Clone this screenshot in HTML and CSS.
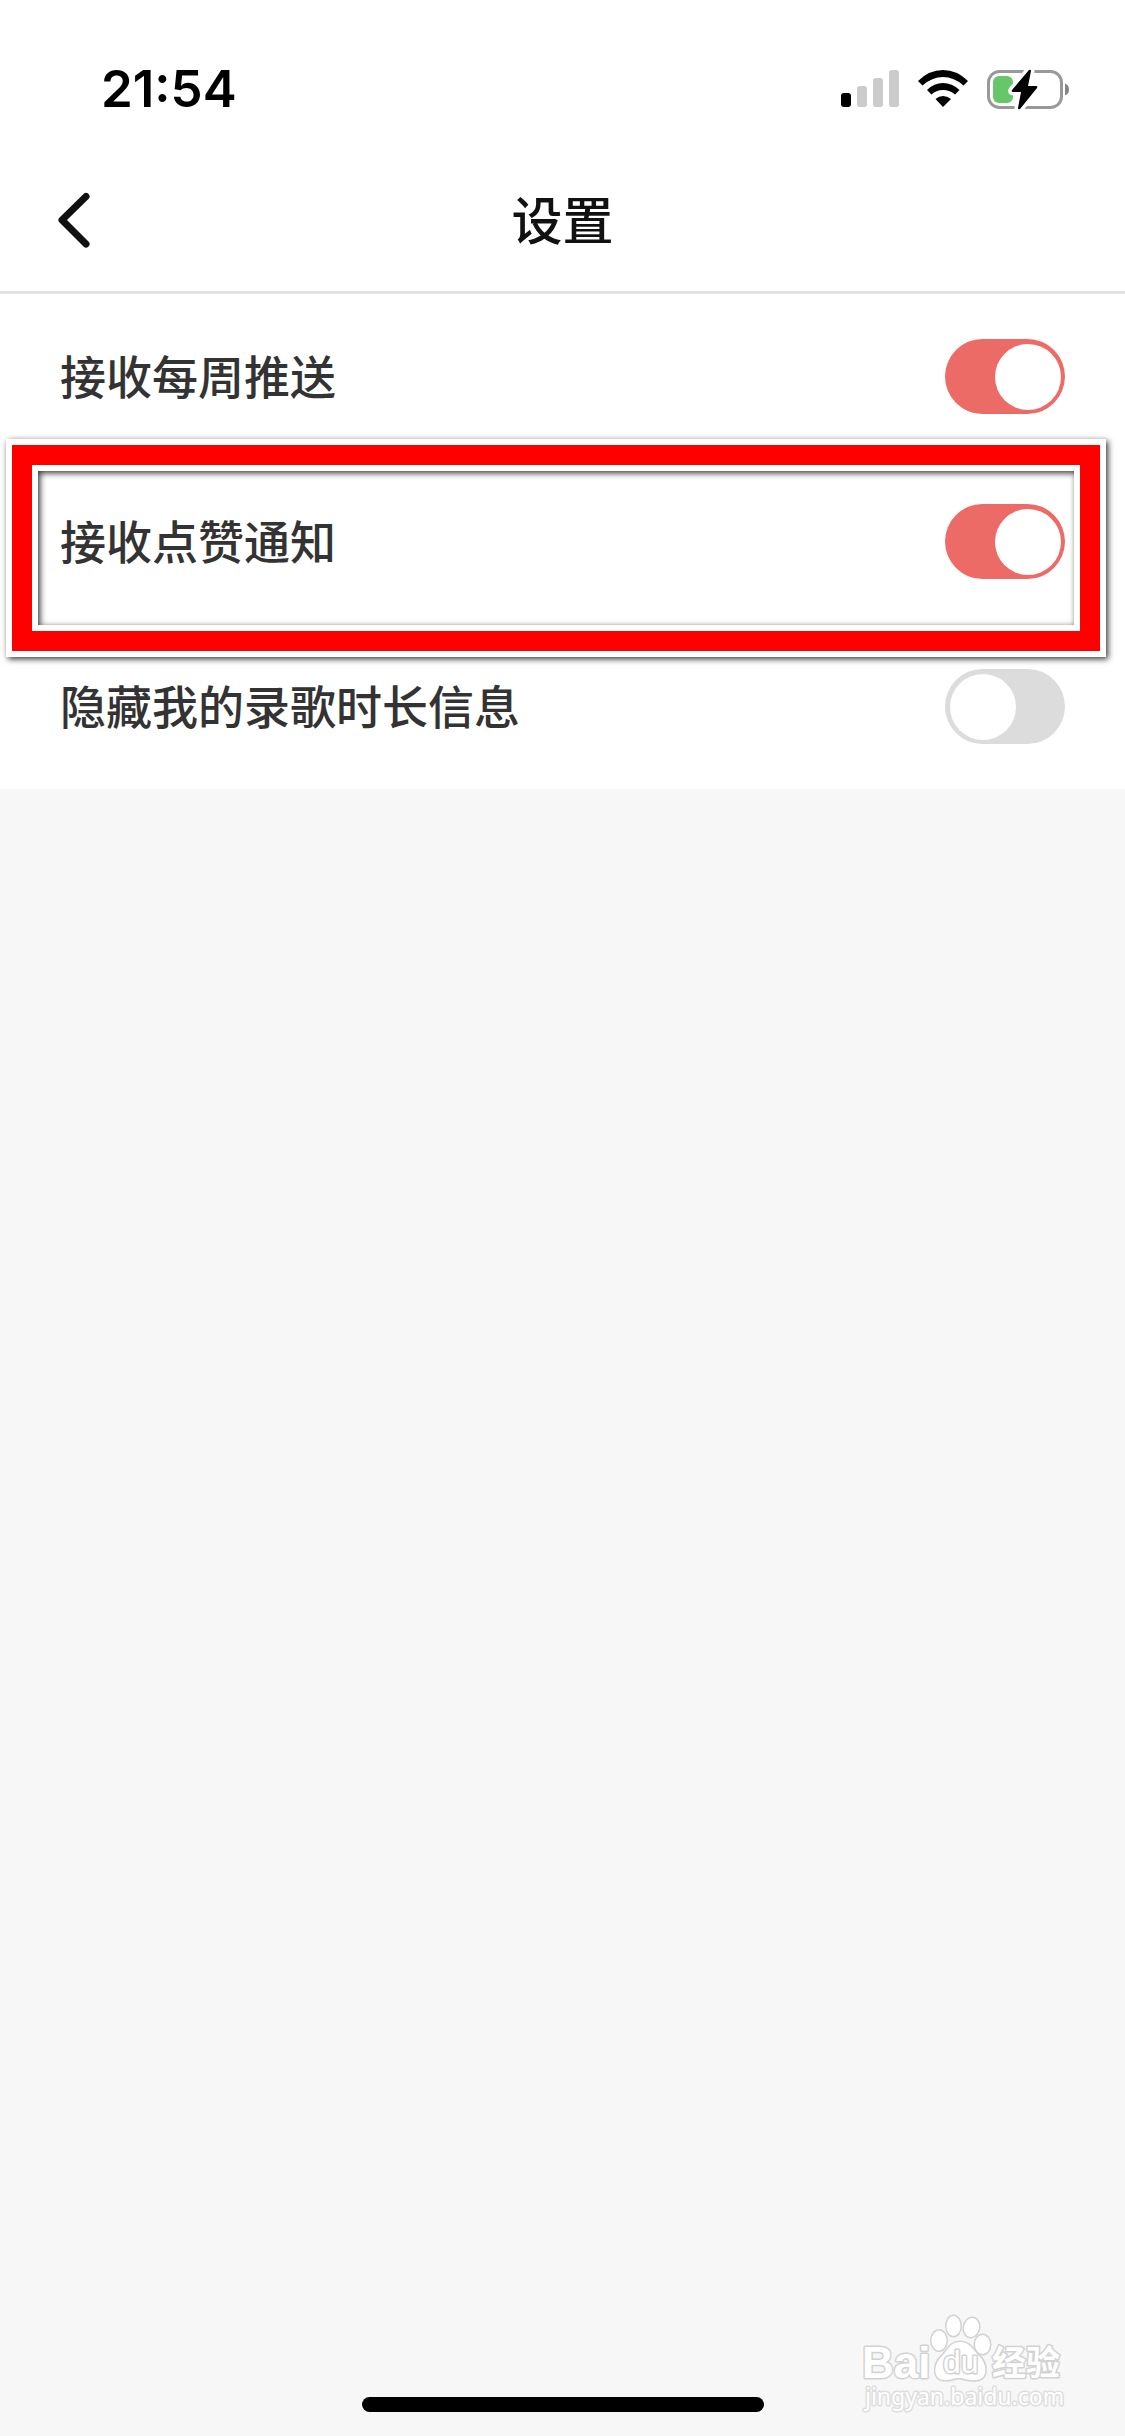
FILE: index.html
```html
<!DOCTYPE html>
<html lang="zh-CN">
<head>
<meta charset="utf-8">
<meta name="viewport" content="width=device-width, initial-scale=1">
<title>设置</title>
<link rel="stylesheet" href="styles.css">
</head>
<body>
<div class="status-bar">
  <time class="clock">21:54</time>
  <div class="indicators">
    <svg width="58" height="38" viewBox="0 0 58 38" aria-hidden="true">
      <rect x="0" y="23" width="10" height="14" rx="3" fill="#000"/>
      <g fill="#cbcbcb">
        <rect x="16" y="16" width="10" height="21" rx="3"/>
        <rect x="32" y="8" width="10" height="29" rx="3"/>
        <rect x="48" y="0" width="10" height="37" rx="3"/>
      </g>
    </svg>
    <svg width="50" height="38" viewBox="0 0 50 38" aria-hidden="true">
      <path d="M0 11Q11 0 25 0T50 11L45.500 15.500Q36 7 25 7T4.500 15.500Z"/>
      <path d="M9 20Q16 13 25 13T41.500 20L37 24.500Q32 20 25 20T13.500 24.500Z"/>
      <path d="M17.500 29Q21 26 25 26T33 29L25 37Z"/>
    </svg>
    <svg width="84" height="44" viewBox="0 0 84 44" aria-hidden="true">
      <rect x="1.500" y="4.500" width="73" height="36" rx="11" fill="none" stroke="#999" stroke-width="3"/>
      <path d="M78 16.500Q82 18 82 22.500T78 28.500Z" fill="#858585"/>
      <rect x="6" y="9" width="20" height="27" rx="6" fill="#67c66a"/>
      <path d="M42 3 25 23Q24 25 26 25H34L31 41Q31 43 33 42L50 21Q51 19 49 19H41L44 4Q44 2 42 3Z" stroke="#fff" stroke-width="7" stroke-linejoin="round" paint-order="stroke"/>
    </svg>
  </div>
</div>
<header class="nav">
  <button class="back" type="button" aria-label="返回">
    <svg width="32" height="56" viewBox="0 0 32 56" aria-hidden="true">
      <path d="M28 4.500 4 28 28 52" fill="none" stroke="#111" stroke-width="7" stroke-linecap="round" stroke-linejoin="round"/>
    </svg>
  </button>
  <h1 class="title">设置</h1>
</header>
<main class="content">
  <div class="list">
    <label class="row">
      <span class="label">接收每周推送</span>
      <input class="switch" type="checkbox" checked>
    </label>
    <label class="row highlighted">
      <span class="label">接收点赞通知</span>
      <input class="switch" type="checkbox" checked>
    </label>
    <label class="row">
      <span class="label">隐藏我的录歌时长信息</span>
      <input class="switch" type="checkbox">
    </label>
  </div>
</main>
<div class="home-indicator"></div>
<svg class="watermark" width="260" height="146" viewBox="0 0 260 146" role="img" aria-label="Baidu 经验">
  <g class="mark">
    <text class="mark-latin" x="22" y="88">Bai</text>
    <ellipse cx="99" cy="50.500" rx="7.500" ry="10"/>
    <ellipse cx="113.500" cy="36" rx="7" ry="10"/>
    <ellipse cx="131.500" cy="37.500" rx="7.500" ry="9.500" transform="rotate(12 131.500 37.500)"/>
    <ellipse cx="142.500" cy="54.500" rx="7.500" ry="9.500"/>
    <path d="M120 52C130 52 133 60 139 66 147 73 149 90 136 90 128 91 124 88 119 88S110 91 103 90C92 88 94 73 102 66 108 60 110 52 120 52Z"/>
    <text class="mark-du" x="103" y="83">du</text>
    <text class="mark-cjk" x="152" y="85">经验</text>
    <text class="mark-url" x="25" y="115">jingyan.baidu.com</text>
  </g>
</svg>
</body>
</html>
```
FILE: styles.css
```css
* {
  box-sizing: border-box;
}

body {
  position: relative;
  display: flex;
  flex-direction: column;
  min-height: 100vh;
  margin: 0;
  background: #fff;
  color: #333;
  font-family: "Noto Sans CJK SC", sans-serif;
}

.status-bar {
  display: flex;
  align-items: center;
  justify-content: space-between;
  height: 132px;
  padding: 46px 54px 0 101px;
}

.clock {
  height: 86px;
  color: #000;
  font: 600 51px/86px Inter, sans-serif;
}

.indicators {
  display: flex;
  align-items: center;
  gap: 19px;
  height: 86px;
}

.nav {
  display: grid;
  grid-template-columns: 1fr auto 1fr;
  align-items: center;
  height: 162px;
  padding: 16px 58px 0;
  border-bottom: 3px solid #e3e3e3;
}

.back {
  display: flex;
  justify-self: start;
  padding: 0;
  border: 0;
  background: none;
}

.title {
  margin: 0;
  padding-bottom: 4px;
  color: #111;
  font-size: 51px;
  font-weight: 500;
  line-height: 72px;
}

.content {
  flex: 1;
  background: #f7f7f7;
}

.list {
  background: #fff;
}

.row {
  position: relative;
  display: flex;
  align-items: center;
  justify-content: space-between;
  height: 165px;
  padding: 0 60px;
}

.label {
  padding-bottom: 6px;
  font-size: 46px;
  font-weight: 500;
  line-height: 66px;
}

/* Callout frame laid over the row and its neighbours */
.highlighted::after {
  content: "";
  position: absolute;
  inset: -14px 25px -27px 12px;
  border: 20px solid #f00;
  box-shadow:
    0 0 0 6px #fff,
    2px 2px 6px 6px rgba(0, 0, 0, 0.8),
    inset 0 0 0 6px #fff,
    inset 2px 2px 6px 6px rgba(0, 0, 0, 0.8);
  pointer-events: none;
}

.switch {
  appearance: none;
  display: flex;
  flex: none;
  width: 120px;
  height: 75px;
  margin: 0;
  padding: 5px 4px 4px 5px;
  border-radius: 38px;
  background: #dcdcdc;
}

.switch::before {
  content: "";
  width: 66px;
  height: 66px;
  border-radius: 50%;
  background: #fff;
}

.switch:checked {
  justify-content: flex-end;
  background: #ec6b66;
}

.home-indicator {
  display: flex;
  justify-content: center;
  padding-bottom: 24px;
  background: #f7f7f7;
}

.home-indicator::before {
  content: "";
  width: 402px;
  height: 15px;
  border-radius: 8px;
  background: #000;
}

.watermark {
  position: absolute;
  right: 25px;
  bottom: 0;
}

.mark {
  fill: #fff;
  stroke: #d2d2d2;
  stroke-width: 3px;
  stroke-linejoin: round;
  paint-order: stroke;
}

.mark-latin {
  font: 700 44px "Liberation Sans", sans-serif;
}

.mark-du {
  font: 400 32px "Liberation Sans", sans-serif;
}

.mark-cjk {
  font: 700 34px "Liberation Sans", "Noto Sans CJK SC", sans-serif;
}

.mark-url {
  stroke: #dedede;
  font: 400 23px "Noto Sans", sans-serif;
}
```
